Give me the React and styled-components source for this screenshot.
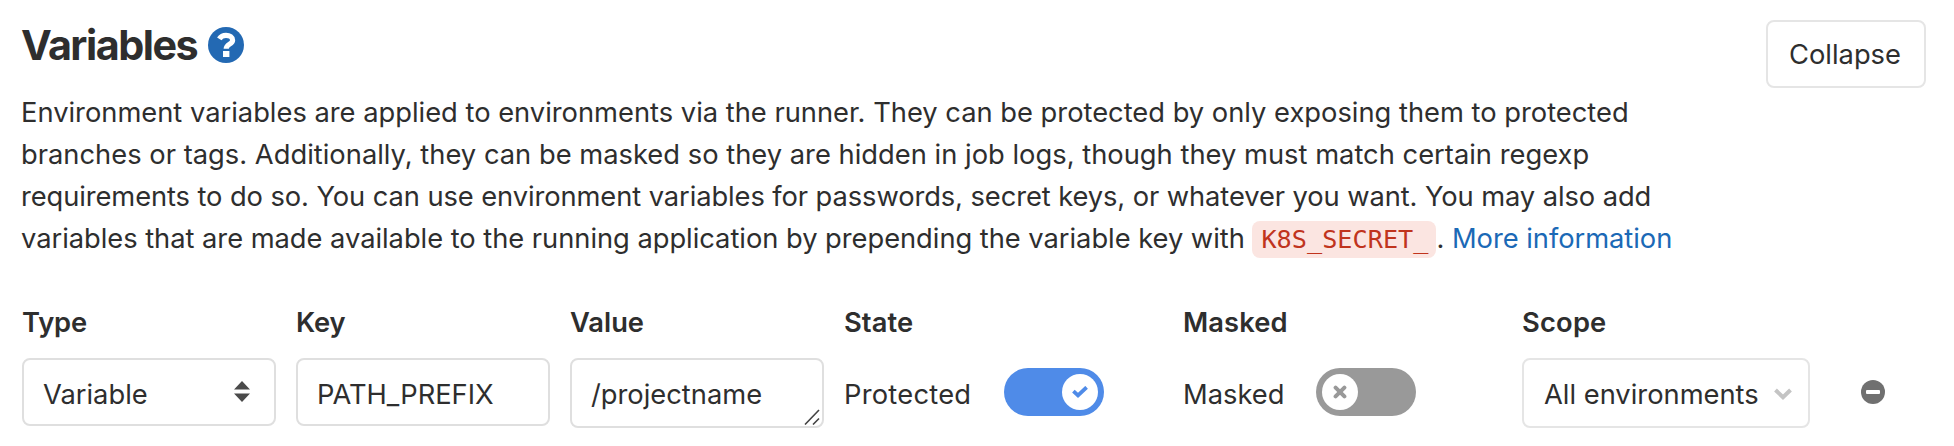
import React from "react";
import styled, { createGlobalStyle } from "styled-components";

const Global = createGlobalStyle`
  *, *::before, *::after { box-sizing: border-box; }
  body {
    margin: 0;
    background: #fff;
    color: #2e2e2e;
    font-family: Inter, "Liberation Sans", sans-serif;
    font-size: 27.3px;
    line-height: 42px;
  }
`;

const Page = styled.section`
  height: 446px;
  overflow: hidden;
  padding: 20px 28px 0 21px;
`;

const Header = styled.header`
  display: flex;
  justify-content: space-between;
  align-items: flex-start;
`;

const Intro = styled.div`
  width: 1700px;
`;

const Title = styled.h4`
  display: flex;
  align-items: center;
  gap: 11px;
  margin: 0 0 21px;
  height: 51px;
  font-size: 41.3px;
  font-weight: 650;
  line-height: 51px;
  letter-spacing: -1.5px;
`;

const HelpLink = styled.a`
  display: flex;
  width: 36px;
  height: 36px;
  margin-bottom: 1px;
`;

const Line = styled.span`
  display: block;
  width: max-content;
  height: 42px;
  white-space: nowrap;
  letter-spacing: ${(p) => p.$track}px;
`;

const Description = styled.p`
  margin: 0;
`;

const Code = styled.code`
  padding: 4px 8px 4px 9px;
  border-radius: 8px;
  background: #fbe5e1;
  color: #c0341d;
  font: 25.2px "DejaVu Sans Mono", monospace;
  letter-spacing: 0.02px;
`;

const Link = styled.a`
  color: #1b69b6;
  text-decoration: none;
`;

const CollapseButton = styled.button`
  width: 160px;
  height: 68px;
  padding: 2px 2px 0 0;
  border: 2px solid #e5e5e5;
  border-radius: 8px;
  background: #fff;
  color: inherit;
  font: inherit;
  letter-spacing: 0;
`;

const Table = styled.div`
  display: grid;
  grid-template-columns: 274px 274px 274px 339px 339px 339px 26px;
  row-gap: 14px;
  margin: 42px 0 0 1px;
`;

const Heading = styled.div`
  font-weight: 600;
  letter-spacing: ${(p) => p.$track ?? -0.15}px;
`;

const Cell = styled.div`
  display: flex;
  align-items: flex-start;
`;

const Field = styled.div`
  position: relative;
  display: flex;
  align-items: center;
  justify-content: space-between;
  width: ${(p) => p.$width ?? 254}px;
  height: ${(p) => p.$height ?? 68}px;
  padding: ${(p) => p.$pad ?? "0 24px 0 19px"};
  border: 2px solid ${(p) => p.$line ?? "#dfdfdf"};
  border-radius: 8px;
  white-space: nowrap;
`;

const FieldText = styled.span`
  padding-top: ${(p) => p.$drop ?? 6}px;
`;

const Grip = styled.svg`
  position: absolute;
  right: 2px;
  bottom: 1px;
`;

const ToggleRow = styled.div`
  display: flex;
  align-items: center;
  justify-content: space-between;
  width: ${(p) => p.$width}px;
  height: 68px;
  letter-spacing: ${(p) => p.$track ?? 0}px;
`;

const ToggleLabel = styled.span`
  padding-top: 6px;
`;

const Switch = styled.span`
  display: flex;
  justify-content: ${(p) => (p.$on ? "flex-end" : "flex-start")};
  width: 100px;
  height: 48px;
  padding: 6px;
  border-radius: 24px;
  background: ${(p) => (p.$on ? "#4f8be8" : "#999")};
  color: ${(p) => (p.$on ? "#4f8be8" : "#999")};
`;

const Knob = styled.span`
  display: flex;
  align-items: center;
  justify-content: center;
  width: 36px;
  height: 36px;
  border-radius: 50%;
  background: #fff;
`;

const Remove = styled.div`
  display: flex;
  padding-top: 22px;
`;

export default function App() {
  return (
    <>
      <Global />
      <Page>
        <Header>
          <Intro>
            <Title>
              Variables
              <HelpLink>
                <svg width="36" height="36" viewBox="0 0 36 36">
                  <circle cx="18" cy="18" r="18" fill="#2369b3" />
                  <path d="M11.3 11.8C12.8 9.4 15 8.3 18 8.3c3.7 0 6.6 1.9 6.6 4.9 0 4.2-6.4 3.8-6.4 8.6" fill="none" stroke="#fff" strokeWidth="5.2" />
                  <rect x="15" y="24" width="6.4" height="6" fill="#fff" />
                </svg>
              </HelpLink>
            </Title>
            <Description>
              <Line $track={0}>Environment variables are applied to environments via the runner. They can be protected by only exposing them to protected</Line>
              <Line $track={0.015}>branches or tags. Additionally, they can be masked so they are hidden in job logs, though they must match certain regexp</Line>
              <Line $track={-0.085}>requirements to do so. You can use environment variables for passwords, secret keys, or whatever you want. You may also add</Line>
              <Line $track={-0.03}>
                variables that are made available to the running application by prepending the variable key with <Code>K8S_SECRET_</Code>. <Link>More information</Link>
              </Line>
            </Description>
          </Intro>
          <CollapseButton>Collapse</CollapseButton>
        </Header>
        <Table>
          <Heading>Type</Heading>
          <Heading>Key</Heading>
          <Heading $track={0}>Value</Heading>
          <Heading $track={0.1}>State</Heading>
          <Heading $track={0.1}>Masked</Heading>
          <Heading $track={0.2}>Scope</Heading>
          <span />
          <Cell>
            <Field>
              <FieldText>Variable</FieldText>
              <svg width="16" height="22" viewBox="0 0 16 22" fill="#4a4a4a">
                <path d="M0 8.5 8 0l8 8.5zM0 12.5h16L8 21z" />
              </svg>
            </Field>
          </Cell>
          <Cell>
            <Field>
              <FieldText>PATH_PREFIX</FieldText>
            </Field>
          </Cell>
          <Cell>
            <Field $height={70} $pad="0 19px">
              <FieldText $drop={4}>/projectname</FieldText>
              <Grip width="16" height="16" viewBox="0 0 16 16" stroke="#444" strokeWidth="1.6">
                <path d="M1 15.5 15 1M9 15.5l6-6" />
              </Grip>
            </Field>
          </Cell>
          <Cell>
            <ToggleRow $width={260} $track={0.25}>
              <ToggleLabel>Protected</ToggleLabel>
              <Switch $on>
                <Knob>
                  <svg width="16" height="12" viewBox="0 0 16 12" fill="none" stroke="currentColor" strokeWidth="3.8">
                    <path d="m1.4 5.1 4.6 4.2 8.6-8" />
                  </svg>
                </Knob>
              </Switch>
            </ToggleRow>
          </Cell>
          <Cell>
            <ToggleRow $width={233}>
              <ToggleLabel>Masked</ToggleLabel>
              <Switch>
                <Knob>
                  <svg width="14" height="14" viewBox="0 0 14 14" fill="none" stroke="currentColor" strokeWidth="4" strokeLinecap="round">
                    <path d="m2.6 2.6 8.8 8.8M11.4 2.6l-8.800 8.800" />
                  </svg>
                </Knob>
              </Switch>
            </ToggleRow>
          </Cell>
          <Cell>
            <Field $width={288} $height={70} $line="#e5e5e5" $pad="0 16px 0 20px">
              <FieldText $drop={4}>All environments</FieldText>
              <svg width="18" height="14" viewBox="0 0 18 14" fill="none" stroke="#c4c4c4" strokeWidth="4">
                <path d="m1.5 4 7.5 7.200L16.500 4" />
              </svg>
            </Field>
          </Cell>
          <Remove>
            <svg width="24" height="24" viewBox="0 0 24 24">
              <circle cx="12" cy="12" r="12" fill="#707070" />
              <rect x="5" y="10" width="14" height="4" rx="1" fill="#fff" />
            </svg>
          </Remove>
        </Table>
      </Page>
    </>
  );
}
